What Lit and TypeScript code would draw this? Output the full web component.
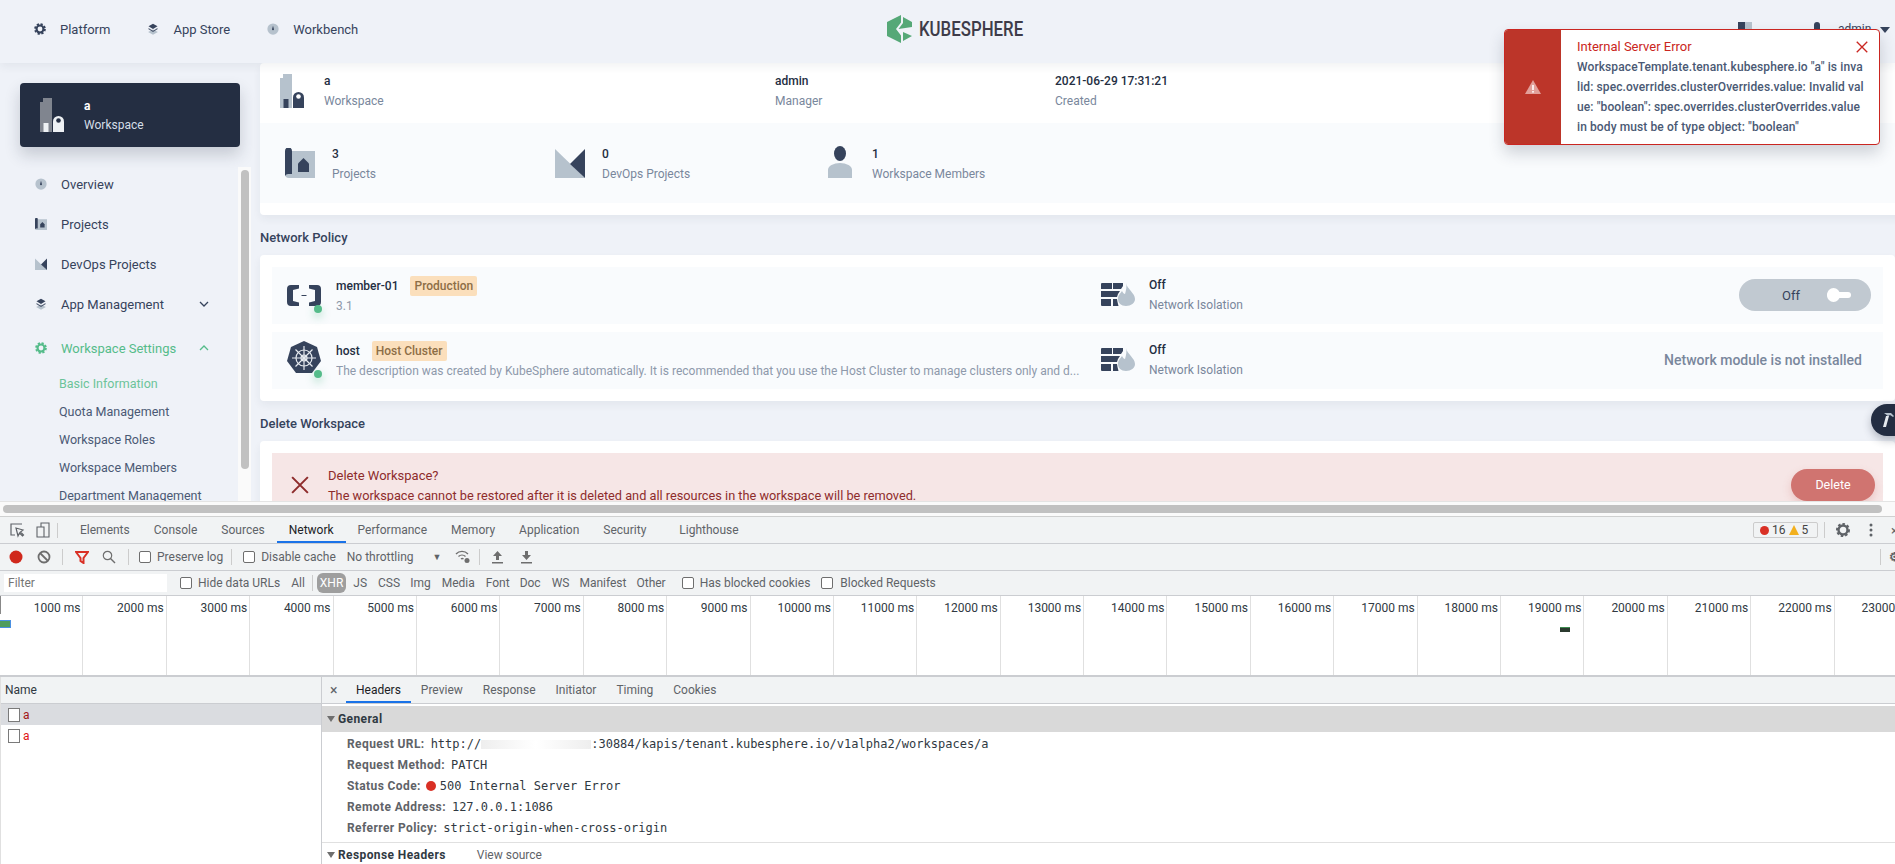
import { LitElement, html, css } from "lit";
import { customElement } from "lit/decorators.js";

const D = "#36435c";
const L = "#b6c2cd";

const gear = (c: string, c2: string) => html`<svg class="ic16" viewBox="0 0 16 16"><circle cx="8" cy="8" r="6.600" fill="none" stroke=${c} stroke-width="2.400" stroke-dasharray="3 2.180"/><circle cx="8" cy="8" r="6" fill=${c}/><circle cx="8" cy="8" r="3.200" fill=${c2}/></svg>`;
const stack = () => html`<svg class="ic16" viewBox="0 0 16 16"><path d="M8 8.5 1.5 12 8 15.5 14.5 12Z" fill=${L}/><path d="M8 1 2 4.4 8 8l6-3.600Z" fill=${D}/><path d="M2 6.800 8 10.400l6-3.600v1.500L8 12 2 8.300Z" fill=${D} opacity=".85"/></svg>`;
const dash = () => html`<svg class="ic16" viewBox="0 0 16 16"><circle cx="8" cy="8" r="7.500" fill=${L}/><path d="M8 3.500 9.300 8.200a1.300 1.300 0 1 1-2.600 0Z" fill=${D}/></svg>`;
const projects = (cls = "ic16") => html`<svg class=${cls} viewBox="0 0 30 30"><path d="M7 3h23v27H4a4 4 0 0 1-4-4h7Z" fill=${L}/><path d="M0 3a3.500 3.500 0 0 1 7 0v23H3.500A3.500 3.500 0 0 0 0 28Z" fill=${D}/><path d="M18.500 10 24 15.500V24H13v-8.500Z" fill=${D}/></svg>`;
const devops = (cls = "ic16") => html`<svg class=${cls} viewBox="0 0 30 30"><path d="M0 1 30 30H0Z" fill=${L}/><path d="M30 1V30L15 16Z" fill=${D}/></svg>`;
const workspace = (tower: string, lock: string, door: string, hole: string, cls: string) => html`<svg class=${cls} viewBox="0 0 24 34"><path d="M3 0h9v4h0v30H0V4h3Z" fill=${tower}/><rect x="3.500" y="25" width="5" height="9" fill=${door}/><path d="M13 34V23.500a5.500 5.500 0 0 1 11 0V34Z" fill=${lock}/><circle cx="18.500" cy="22.500" r="2.300" fill=${hole}/></svg>`;
const person = () => html`<svg class="i-person" viewBox="0 0 24 32"><ellipse cx="12" cy="7.500" rx="6" ry="7.500" fill=${D}/><path d="M0 32V24a12 7 0 0 1 24 0v8Z" fill=${L}/></svg>`;
const firewall = () => html`<svg class="i-fire" viewBox="0 0 34 23"><path d="M25 0c1 6 9 10 9 16 0 4-4 7-9 7s-8-3-8-7c0-4 2-5 4-8 1 2 2 3 3 3 1-4 2-7 1-11Z" fill=${L}/><path d="M0 1a1 1 0 0 1 1-1h10v6H0Zm12-1h10v3l-2 3h-8ZM0 8h19l-2 3-1 3H0Zm0 8h10v7H1a1 1 0 0 1-1-1Zm12 0h4l.500 3 1 4H12Z" fill=${D}/></svg>`;
const cloud = () => html`<svg class="i-cloud" viewBox="0 0 34 21"><path d="M12 0H4a4 4 0 0 0-4 4v13a4 4 0 0 0 4 4h8v-3.500L6 16V5l6-1.500ZM22 0h8a4 4 0 0 1 4 4v13a4 4 0 0 1-4 4h-8v-3.500L28 16V5l-6-1.500Z" fill=${D}/><rect x="14.500" y="10" width="5" height="1" fill=${D}/></svg>`;
const helm = () => html`<svg class="i-helm" viewBox="0 0 34 34"><path d="M17 0 30 6 34 20 25 32H9L0 20 4 6Z" fill=${D}/><g stroke="#e6eaef" stroke-width="1.200" fill="none"><circle cx="17" cy="17" r="8"/><circle cx="17" cy="17" r="3"/><path d="M17 5v24M5 17h24M8.500 8.500l17 17M25.500 8.500l-17 17"/></g></svg>`;
const chev = (up: boolean) => html`<svg class="chev" viewBox="0 0 12 12"><path d=${up ? "M2 8l4-4 4 4" : "M2 4l4 4 4-4"} fill="none" stroke=${up ? "#55bc8a" : D} stroke-width="1.300"/></svg>`;
const x = (c: string, cls: string, w = 1.6) => html`<svg class=${cls} viewBox="0 0 16 16"><path d="M1 1l14 14M15 1 1 15" stroke=${c} stroke-width=${w} fill="none"/></svg>`;
const cb = () => html`<span class="cb"></span>`;

const ticks = Array.from({ length: 23 }, (_, i) => (i + 1) * 1000);

@customElement("app-root")
export class AppRoot extends LitElement {
  static styles = css`
    :host { display: block; width: 1895px; height: 864px; overflow: hidden; position: relative; font-family: Roboto, "Liberation Sans", sans-serif; font-size: 12px; color: #242e42; background: #fff; }
    svg { display: block; flex: none; }
    .ic16 { width: 12px; height: 12px; }
    .page { height: 501px; position: relative; overflow: hidden; background: #eff2f8; }
    .head { height: 63px; display: flex; align-items: flex-start; position: relative; z-index: 2; background: #eff2f8; box-shadow: 0 4px 8px rgba(36,46,66,.06); }
    .nav { width: 887px; display: flex; gap: 37px; padding: 21px 0 0 34px; box-sizing: border-box; flex: none; }
    .nav div { display: flex; align-items: center; gap: 14px; font-size: 13px; color: #36435c; height: 16px; }
    .logo { width: 140px; flex: none; display: flex; gap: 7px; padding-top: 15px; }
    .logo svg { width: 25px; height: 28px; }
    .logo span { font-size: 20.5px; font-weight: 500; color: #3e3c49; line-height: 28px; display: block; transform: scaleX(.82); transform-origin: left center; white-space: nowrap; }
    .user { margin-left: 711px; display: flex; padding-top: 22px; font-size: 12px; color: #36435c; }
    .user i { display: block; width: 14px; height: 16px; background: linear-gradient(90deg, #36435c 50%, #b6c2cd 50%); margin-right: 62px; }
    .user b { display: block; width: 6px; height: 16px; background: #36435c; border-radius: 3px 3px 0 0; margin-right: 18px; }
    .user span { line-height: 16px; width: 42px; margin-top: -1px; }
    .user u { display: block; border: 5px solid transparent; border-top: 6px solid #36435c; margin-top: 5px; height: 0; }
    .body { display: flex; height: 438px; }
    .side { width: 238px; flex: none; box-sizing: border-box; padding: 20px 0 0 20px; position: relative; }
    .ws { width: 220px; height: 64px; box-sizing: border-box; background: #242e42; border-radius: 4px; box-shadow: 0 8px 16px rgba(36,46,66,.2); display: flex; align-items: center; gap: 20px; padding-left: 20px; color: #fff; }
    .i-ws { width: 24px; height: 34px; }
    .ws b { display: block; line-height: 20px; font-size: 12px; font-weight: 700; }
    .ws span { display: block; line-height: 18px; color: #d5dee7; }
    .menu { margin: 17px 0 0 15px; display: flex; flex-direction: column; }
    .mi { height: 40px; display: flex; align-items: center; gap: 14px; font-size: 13px; color: #36435c; width: 175px; position: relative; }
    .mi span { flex: 1; }
    .chev { width: 12px; height: 12px; }
    .mi.on { color: #55bc8a; height: 48px; }
    .sub { height: 28px; line-height: 28px; font-size: 12.500px; padding-left: 24px; color: #4a5974; white-space: nowrap; }
    .sub.on { color: #55bc8a; opacity: .85; padding-top: 0; }
    .subs { margin-top: -2px; }
    .vbar { width: 13px; flex: none; margin-top: 104px; background: #fafafa; position: relative; padding: 3px 2px 0 3px; box-sizing: border-box; }
    .vbar div { height: 299px; background: #c1c1c1; border-radius: 4px; }
    .main { margin-left: 9px; width: 1660px; flex: none; }
    .card { background: #fff; border-radius: 4px; box-shadow: 0 4px 8px rgba(36,46,66,.06); }
    .top { height: 60px; display: flex; padding: 11px 0 0 20px; box-sizing: border-box; }
    .i-big { width: 24px; height: 34px; margin-right: 20px; }
    .t b { display: block; font-weight: 500; line-height: 14px; font-size: 12px; }
    .t span { display: block; color: #79879c; line-height: 18px; margin-top: 4px; white-space: nowrap; }
    .top .t { margin-top: 0; }
    .stats { height: 80px; background: #f9fbfd; display: flex; padding: 24px 0 0 25px; box-sizing: border-box; }
    .stat { display: flex; gap: 17px; }
    .stat.p { gap: 20px; }
    .i30 { width: 30px; height: 30px; margin-top: 1px; }
    .i-person { width: 24px; height: 32px; margin-top: -1px; margin-left: 3px; }
    .h { font-size: 13px; font-weight: 500; color: #36435c; line-height: 45px; height: 40px; }
    .net { height: 146px; padding: 12px; box-sizing: border-box; width: 1635px; display: flex; flex-direction: column; gap: 8px; }
    .row { height: 57px; background: #f9fbfd; display: flex; flex: none; position: relative; width: 1611px; }
    .a { width: 64px; flex: none; position: relative; }
    .i-cloud { width: 34px; height: 21px; position: absolute; left: 15px; top: 18px; }
    .i-helm { width: 34px; height: 34px; position: absolute; left: 15px; top: 9px; }
    .dot { position: absolute; left: 42px; top: 38px; width: 8px; height: 8px; border-radius: 50%; background: #55bc8a; box-shadow: 0 4px 8px rgba(85,188,138,.45); }
    .info { width: 765px; flex: none; padding-top: 9px; box-sizing: border-box; overflow: hidden; }
    .nm { display: flex; align-items: center; gap: 12px; height: 20px; font-weight: 500; }
    .badge { background: #fbdfbc; color: #8d6e46; border-radius: 2px; padding: 0 4px; height: 20px; line-height: 20px; font-weight: 500; }
    .ds { color: #8e99ab; line-height: 20px; white-space: nowrap; }
    .iso { display: flex; gap: 14px; padding-top: 16px; width: 240px; box-sizing: border-box; }
    .i-fire { width: 34px; height: 23px; }
    .iso .t { margin-top: -5px; }
    .toggle { position: absolute; left: 1467px; top: 12px; width: 132px; height: 32px; border-radius: 16px; background: #c1c9d1; display: flex; align-items: center; font-size: 12px; color: #36435c; }
    .toggle span { margin-left: 43px; font-size: 13px; }
    .knob { margin-left: 27px; position: relative; width: 24px; height: 6px; background: #fff; border-radius: 3px; }
    .knob::before { content: ""; position: absolute; left: 0; top: -4px; width: 13px; height: 14px; border-radius: 50%; background: #fff; }
    .nomod { margin-left: auto; padding: 20px 21px 0 0; font-size: 14px; font-weight: 500; color: #79879c; }
    .delc { height: 120px; padding: 12px; box-sizing: border-box; width: 1635px; }
    .del { background: #f6e6e6; height: 100px; width: 1611px; display: flex; position: relative; color: #8e2c2c; padding: 15px 0 0 56px; box-sizing: border-box; }
    .i-x { position: absolute; left: 19px; top: 23px; width: 18px; height: 18px; }
    .del b { display: block; font-weight: 400; font-size: 13px; line-height: 16px; }
    .del span { display: block; line-height: 16px; margin-top: 4px; font-size: 12.750px; }
    .delbtn { position: absolute; left: 1519px; top: 16px; width: 84px; height: 32px; border-radius: 16px; background: #d07470; color: #fff; text-align: center; line-height: 32px; font-size: 12.500px; box-shadow: 0 4px 8px rgba(208,116,112,.3); }
    .toast { position: absolute; z-index: 5; left: 1504px; top: 29px; width: 376px; height: 116px; box-sizing: border-box; display: flex; background: #fff; border: 1px solid #ca2621; border-radius: 4px; box-shadow: 0 8px 16px rgba(36,46,66,.2); overflow: hidden; }
    .tl { width: 56px; background: #bc3529; display: flex; align-items: center; justify-content: center; flex: none; }
    .tl svg { width: 16px; height: 16px; }
    .tb { padding: 7px 16px 0 16px; position: relative; flex: 1; font-size: 12px; }
    .tb h4 { margin: 0; font-weight: 400; font-size: 13px; color: #ca2621; line-height: 20px; }
    .tb p { margin: 0; color: #4a5974; font-weight: 500; line-height: 20px; white-space: nowrap; font-size: 12px; letter-spacing: .1px; }
    .tb .i-close { position: absolute; right: 12px; top: 11px; width: 12px; height: 12px; }
    .ham { position: absolute; z-index: 3; left: 1871px; top: 404px; width: 30px; height: 32px; border-radius: 16px 0 0 16px; background: #242e42; box-shadow: 0 4px 8px rgba(36,46,66,.3); }
    .ham svg { margin: 8px 0 0 9px; width: 14px; height: 16px; }
    .hbar { height: 16px; box-sizing: border-box; background: #fafafa; border-top: 1px solid #e4e4e4; border-bottom: 1px solid #cfd0d0; padding: 3px 13px 0 3px; }
    .hbar div { height: 8px; background: #c1c1c1; border-radius: 4px; }
    .dev { height: 347px; font-family: Roboto, "Liberation Sans", sans-serif; font-size: 12px; color: #5f6368; }
    .bar { background: #f1f3f4; border-bottom: 1px solid #cbcdd1; display: flex; align-items: center; box-sizing: border-box; position: relative; white-space: nowrap; }
    .tabs { height: 27px; padding-left: 6px; }
    .tabs > i { display: block; width: 1px; height: 15px; background: #ccc; margin: 0 10px 0 7px; }
    .tab { padding: 0 12px; line-height: 26px; height: 26px; box-sizing: border-box; }
    .tab.on { color: #202124; border-bottom: 2px solid #1a73e8; }
    .tool { height: 27px; }
    .sep { width: 1px; height: 16px; background: #ccc; flex: none; }
    .cb { display: block; width: 10px; height: 10px; border: 1px solid #6e6e6e; border-radius: 2px; background: #fff; flex: none; }
    .filter { height: 25px; }
    .inp { width: 163px; height: 18px; margin-left: 4px; background: #fff; line-height: 18px; padding-left: 4px; box-sizing: border-box; color: #757575; }
    .xhr { background: #9e9e9e; color: #fff; border-radius: 6px; height: 20px; line-height: 20px; padding: 0 3px; }
    .over { height: 81px; border-bottom: 2px solid #cbcdd1; box-sizing: border-box; position: relative; display: flex; background: #fff; }
    .tick { width: 83.400px; flex: none; box-sizing: border-box; border-right: 1px solid #e0e0e0; text-align: right; padding: 5px 2px 0 0; color: #303942; }
    .bar1 { position: absolute; left: 0; top: 24px; width: 10px; height: 6px; border: 1px solid #4a90e2; border-left: 0; background: #4f9d5d; }
    .bar2 { position: absolute; left: 1560px; top: 31px; width: 10px; height: 4px; background: #2b3a2f; border-top: 1px solid #3d8b4f; }
    .start { position: absolute; left: 0; top: 0; width: 1px; height: 18px; background: #888; }
    .split { display: flex; height: 187px; }
    .names { width: 322px; flex: none; border-right: 1px solid #cbcdd1; box-sizing: border-box; border-left: 1px solid #e0e0e0; }
    .nh { height: 27px; background: #f1f3f4; border-bottom: 1px solid #cbcdd1; line-height: 26px; padding-left: 4px; box-sizing: border-box; color: #303942; }
    .nr { height: 21px; display: flex; align-items: center; gap: 3px; padding-left: 7px; color: #e01414; }
    .nr.sel { background: #dadce0; color: #a31515; margin-left: 0; }
    .nr em { display: block; width: 10px; height: 12px; border: 1px solid #7a7a7a; background: #fff; font-style: normal; flex: none; }
    .det { flex: 1; min-width: 0; }
    .dt { height: 27px; background: #f1f3f4; border-bottom: 1px solid #cbcdd1; display: flex; align-items: center; padding-left: 8px; box-sizing: border-box; }
    .dt s { text-decoration: none; width: 16px; font-size: 14px; color: #5f6368; }
    .dt .tab { padding: 0 10px; line-height: 26px; }
    .gh { margin-top: 2px; height: 26px; background: #d9d9d9; display: flex; align-items: center; gap: 3px; padding-left: 5px; font-weight: 700; color: #303942; letter-spacing: .4px; }
    .rh { display: flex; align-items: center; gap: 3px; padding-left: 5px; font-weight: 700; color: #303942; height: 24px; border-top: 1px solid #e0e0e0; margin-top: 4px; letter-spacing: .4px; }
    .rh span { margin-left: 28px; font-weight: 400; color: #5f6368; letter-spacing: 0; }
    .rh .tri { margin-left: 0; }
    .tri { width: 0; height: 0; border: 4px solid transparent; border-top: 6px solid #6e6e6e; border-bottom: 0; }
    .kvs { padding: 0 0 0 25px; margin-top: 1px; }
    .kv { height: 21px; display: flex; align-items: center; color: #303942; gap: 4px; white-space: nowrap; margin-top: 0; }
    .kv b { font-weight: 700; color: #5f6368; letter-spacing: .4px; }
    .kv code { font-family: "DejaVu Sans Mono", monospace; font-size: 12px; color: #303942; margin-left: 2px; }
    .blur { display: inline-block; width: 110px; height: 9px; background: linear-gradient(90deg, #eee, #fff 50%, #eee); vertical-align: middle; }
    .reddot { width: 10px; height: 10px; border-radius: 50%; background: #d93025; flex: none; margin-left: 1px; }
    .errs { position: absolute; left: 1753px; top: 5px; width: 65px; height: 16px; border: 1px solid #ccc; border-radius: 2px; box-sizing: border-box; display: flex; align-items: center; padding-left: 6px; gap: 3px; font-size: 12px; color: #444; }
    .errs i { display: block; width: 9px; height: 9px; background: #d93025; border-radius: 50%; }
    .pos { position: absolute; }
  `;

  private sp(w: number) {
    return html`<span style="width:${w}px;flex:none"></span>`;
  }

  render() {
    const sp = (w: number) => this.sp(w);
    return html`
      <div class="page">
        <div class="head">
          <div class="nav">
            <div>${gear(D, "#eff2f8")}Platform</div>
            <div>${stack()}App Store</div>
            <div>${dash()}Workbench</div>
          </div>
          <div class="logo">
            <svg viewBox="0 0 25 28"><path d="M14 0V7.500L9 14l5 6.500V28L0 21V7Z" fill="#55a877"/><path d="M16 2 25 7v5L11.500 14 16 8ZM16 17l9 4-9 5Z" fill="#55a877"/></svg>
            <span>KUBESPHERE</span>
          </div>
          <div class="user"><i></i><b></b><span>admin</span><u></u></div>
        </div>
        <div class="body">
          <div class="side">
            <div class="ws">
              ${workspace("#80858f", "#eef1f4", "#eef1f4", "#242e42", "i-ws")}
              <div><b>a</b><span>Workspace</span></div>
            </div>
            <div class="menu">
              <div class="mi">${dash()}<span>Overview</span></div>
              <div class="mi">${projects()}<span>Projects</span></div>
              <div class="mi">${devops()}<span>DevOps Projects</span></div>
              <div class="mi">${stack()}<span>App Management</span>${chev(false)}</div>
              <div class="mi on">${gear("#55bc8a", "#eff2f8")}<span>Workspace Settings</span>${chev(true)}</div>
              <div class="subs">
                <div class="sub on">Basic Information</div>
                <div class="sub">Quota Management</div>
                <div class="sub">Workspace Roles</div>
                <div class="sub">Workspace Members</div>
                <div class="sub">Department Management</div>
              </div>
            </div>
          </div>
          <div class="vbar"><div></div></div>
          <div class="main">
            <div class="card" style="height:152px">
              <div class="top">
                ${workspace(L, D, D, "#fff", "i-big")}
                <div class="t" style="width:451px"><b>a</b><span>Workspace</span></div>
                <div class="t" style="width:280px"><b>admin</b><span>Manager</span></div>
                <div class="t"><b>2021-06-29 17:31:21</b><span>Created</span></div>
              </div>
              <div class="stats">
                <div class="stat" style="width:270px">${projects("i30")}<div class="t"><b>3</b><span>Projects</span></div></div>
                <div class="stat" style="width:270px">${devops("i30")}<div class="t"><b>0</b><span>DevOps Projects</span></div></div>
                <div class="stat p">${person()}<div class="t"><b>1</b><span>Workspace Members</span></div></div>
              </div>
            </div>
            <div class="h">Network Policy</div>
            <div class="card net">
              <div class="row">
                <div class="a">${cloud()}<span class="dot"></span></div>
                <div class="info">
                  <div class="nm">member-01 <span class="badge">Production</span></div>
                  <div class="ds">3.1</div>
                </div>
                <div class="iso">${firewall()}<div class="t"><b>Off</b><span>Network Isolation</span></div></div>
                <div class="toggle"><span>Off</span><div class="knob"></div></div>
              </div>
              <div class="row">
                <div class="a">${helm()}<span class="dot"></span></div>
                <div class="info">
                  <div class="nm">host <span class="badge">Host Cluster</span></div>
                  <div class="ds">The description was created by KubeSphere automatically. It is recommended that you use the Host Cluster to manage clusters only and d...</div>
                </div>
                <div class="iso">${firewall()}<div class="t"><b>Off</b><span>Network Isolation</span></div></div>
                <div class="nomod">Network module is not installed</div>
              </div>
            </div>
            <div class="h">Delete Workspace</div>
            <div class="card delc">
              <div class="del">
                ${x("#8e2c2c", "i-x", 1.8)}
                <div><b>Delete Workspace?</b><span>The workspace cannot be restored after it is deleted and all resources in the workspace will be removed.</span></div>
                <div class="delbtn">Delete</div>
              </div>
            </div>
          </div>
        </div>
        <div class="toast">
          <div class="tl"><svg viewBox="0 0 16 16"><path d="M8 1 16 15H0Z" fill="#e2a09a"/><rect x="7.200" y="6" width="1.600" height="5" fill="#fff"/><rect x="7.200" y="12" width="1.600" height="1.600" fill="#fff"/></svg></div>
          <div class="tb">
            <h4>Internal Server Error</h4>
            <p>WorkspaceTemplate.tenant.kubesphere.io "a" is inva<br>lid: spec.overrides.clusterOverrides.value: Invalid val<br>ue: "boolean": spec.overrides.clusterOverrides.value<br>in body must be of type object: "boolean"</p>
            ${x("#ca2621", "i-close", 1.8)}
          </div>
        </div>
        <div class="ham"><svg viewBox="0 0 14 16"><path d="M4 1h7l3 3-1 1-3-2-2 1Z" fill="#b6c2cd"/><path d="M6 4h3L6 15H3Z" fill="#e6eaef"/></svg></div>
      </div>
      <div class="hbar"><div></div></div>
      <div class="dev">
        <div class="bar tabs">
          <svg width="16" height="16" viewBox="0 0 16 16" style="margin-left:3px"><path d="M13 2H2v11h4M14 8 7 6l2 8 1.500-3 3 3 1-1-3-3Z" fill="none" stroke="#5f6368" stroke-width="1.200"/></svg>
          ${sp(11)}
          <svg width="14" height="16" viewBox="0 0 14 16"><path d="M5 5V1h8v14H1V5h7v10" fill="none" stroke="#5f6368" stroke-width="1.100"/></svg>
          <i></i>
          <div class="tab">Elements</div><div class="tab">Console</div><div class="tab">Sources</div><div class="tab on">Network</div><div class="tab">Performance</div><div class="tab">Memory</div><div class="tab">Application</div><div class="tab">Security</div><div class="tab" style="margin-left:9px">Lighthouse</div>
          <div class="errs"><i></i>16 <svg width="10" height="10" viewBox="0 0 10 10"><path d="M5 0 10 10H0Z" fill="#f2b01e"/></svg>5</div>
          <span class="sep pos" style="left:1824px;top:5px"></span>
          <svg class="pos" style="left:1836px;top:6px" width="14" height="14" viewBox="0 0 14 14"><circle cx="7" cy="7" r="4.500" fill="none" stroke="#5f6368" stroke-width="2.400"/><circle cx="7" cy="7" r="6" fill="none" stroke="#5f6368" stroke-width="2" stroke-dasharray="2.500 2"/></svg>
          <svg class="pos" style="left:1869px;top:6px" width="4" height="14" viewBox="0 0 4 14"><circle cx="2" cy="2" r="1.500" fill="#5f6368"/><circle cx="2" cy="7" r="1.500" fill="#5f6368"/><circle cx="2" cy="12" r="1.500" fill="#5f6368"/></svg>
          <span class="pos" style="left:1891px;top:6px;font-size:13px">×</span>
        </div>
        <div class="bar tool">
          <svg width="14" height="14" viewBox="0 0 14 14" style="margin-left:9px"><circle cx="7" cy="7" r="6.500" fill="#d0281c"/></svg>
          ${sp(14)}
          <svg width="14" height="14" viewBox="0 0 14 14"><circle cx="7" cy="7" r="5.500" fill="none" stroke="#6e6e6e" stroke-width="1.800"/><path d="M3 3l8 8" stroke="#6e6e6e" stroke-width="1.800"/></svg>
          ${sp(11)}<span class="sep"></span>${sp(12)}
          <svg width="14" height="14" viewBox="0 0 14 14"><path d="M1 2h12L8.500 8v5l-3-2V8Z" fill="none" stroke="#d93025" stroke-width="2"/></svg>
          ${sp(13)}
          <svg width="14" height="14" viewBox="0 0 14 14"><circle cx="5.500" cy="5.500" r="4.200" fill="none" stroke="#6e6e6e" stroke-width="1.200"/><path d="M8.500 8.500 13 13" stroke="#6e6e6e" stroke-width="1.400"/></svg>
          ${sp(12)}<span class="sep"></span>${sp(10)}${cb()}${sp(6)}<span>Preserve log</span>${sp(8)}<span class="sep"></span>${sp(11)}${cb()}${sp(6)}<span>Disable cache</span>${sp(11)}<span>No throttling</span>${sp(19)}
          <span style="font-size:9px">▼</span>${sp(14)}
          <svg width="16" height="14" viewBox="0 0 16 14"><path d="M1 4a8 8 0 0 1 12 0M3.500 6.500a5 5 0 0 1 7 0M6 9a2 2 0 0 1 2.500 0" fill="none" stroke="#6e6e6e" stroke-width="1.300"/><circle cx="12" cy="10.500" r="2.500" fill="#6e6e6e"/></svg>
          ${sp(8)}<span class="sep"></span>${sp(12)}
          <svg width="11" height="14" viewBox="0 0 11 14"><path d="M5.500 1 10 6H7v4H4V6H1ZM0 12h11v1.500H0Z" fill="#6e6e6e"/></svg>
          ${sp(18)}
          <svg width="11" height="14" viewBox="0 0 11 14"><path d="M5.500 10 10 5H7V1H4v4H1ZM0 12h11v1.500H0Z" fill="#6e6e6e"/></svg>
          <span class="sep pos" style="left:1880px;top:5px"></span>
          <span class="pos" style="left:1889px;top:6px;color:#5f6368;font-weight:700">⚙</span>
        </div>
        <div class="bar filter">
          <div class="inp">Filter</div>${sp(13)}${cb()}${sp(6)}<span>Hide data URLs</span>${sp(11)}<span>All</span>${sp(7)}<span class="sep"></span>${sp(4)}<span class="xhr">XHR</span>${sp(7)}<span>JS</span>${sp(11)}<span>CSS</span>${sp(10)}<span>Img</span>${sp(11)}<span>Media</span>${sp(11)}<span>Font</span>${sp(10)}<span>Doc</span>${sp(11)}<span>WS</span>${sp(10)}<span>Manifest</span>${sp(10)}<span>Other</span>${sp(16)}${cb()}${sp(6)}<span>Has blocked cookies</span>${sp(11)}${cb()}${sp(7)}<span>Blocked Requests</span>
        </div>
        <div class="over">
          ${ticks.map((t) => html`<div class="tick">${t} ms</div>`)}
          <span class="start"></span><span class="bar1"></span><span class="bar2"></span>
        </div>
        <div class="split">
          <div class="names">
            <div class="nh">Name</div>
            <div class="nr sel"><em></em>a</div>
            <div class="nr"><em></em>a</div>
          </div>
          <div class="det">
            <div class="dt"><s>×</s>
              <div class="tab on">Headers</div><div class="tab">Preview</div><div class="tab">Response</div><div class="tab">Initiator</div><div class="tab">Timing</div><div class="tab">Cookies</div>
            </div>
            <div class="gh"><span class="tri"></span>General</div>
            <div class="kvs">
              <div class="kv"><b>Request URL:</b><code>http://<span class="blur"></span>:30884/kapis/tenant.kubesphere.io/v1alpha2/workspaces/a</code></div>
              <div class="kv"><b>Request Method:</b><code>PATCH</code></div>
              <div class="kv"><b>Status Code:</b><span class="reddot"></span><code style="margin-left:0">500 Internal Server Error</code></div>
              <div class="kv"><b>Remote Address:</b><code>127.0.0.1:1086</code></div>
              <div class="kv"><b>Referrer Policy:</b><code>strict-origin-when-cross-origin</code></div>
            </div>
            <div class="rh"><span class="tri"></span>Response Headers<span>View source</span></div>
          </div>
        </div>
      </div>
    `;
  }
}
